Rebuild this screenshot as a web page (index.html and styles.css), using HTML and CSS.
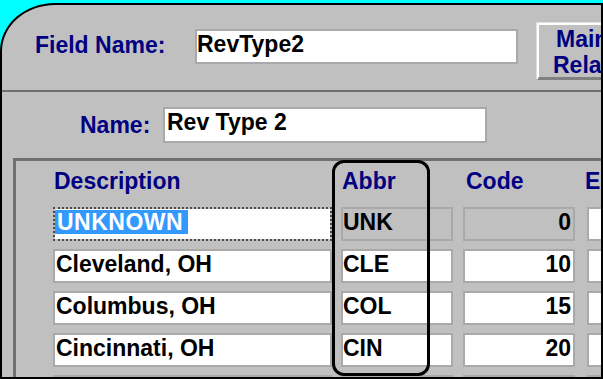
FILE: index.html
```html
<!DOCTYPE html>
<html>
<head>
<meta charset="utf-8">
<title>Field Name</title>
<link rel="stylesheet" href="styles.css">
</head>
<body>
<div class="screen">
  <div class="window">
    <div class="top-row">
      <div class="label lbl-field">Field Name:</div>
      <div class="field fld-fieldname">RevType2</div>
      <div class="btn">
        <span class="btn-l1">Maintain</span>
        <span class="btn-l2">Relationships</span>
      </div>
    </div>
    <div class="sep"></div>
    <div class="name-row">
      <div class="label lbl-name">Name:</div>
      <div class="field fld-name">Rev Type 2</div>
    </div>
    <div class="panel">
      <div class="grid">
        <div class="hdr hdr-desc">Description</div>
        <div class="hdr hdr-abbr">Abbr</div>
        <div class="hdr hdr-code">Code</div>
        <div class="hdr hdr-e">E</div>

        <div class="field desc focus"><span class="sel">UNKNOWN</span></div>
        <div class="field abbr disabled">UNK</div>
        <div class="field code disabled">0</div>
        <div class="field ext"></div>

        <div class="field desc">Cleveland, OH</div>
        <div class="field abbr">CLE</div>
        <div class="field code">10</div>
        <div class="field ext"></div>

        <div class="field desc">Columbus, OH</div>
        <div class="field abbr">COL</div>
        <div class="field code">15</div>
        <div class="field ext"></div>

        <div class="field desc">Cincinnati, OH</div>
        <div class="field abbr">CIN</div>
        <div class="field code">20</div>
        <div class="field ext"></div>

        <div class="field desc"></div>
        <div class="field abbr"></div>
        <div class="field code"></div>
        <div class="field ext"></div>
      </div>
      <div class="abbr-ring"></div>
    </div>
  </div>
</div>
</body>
</html>
```
FILE: styles.css
```css
html, body {
  margin: 0;
  padding: 0;
}
body {
  font-family: "Liberation Sans", Arial, sans-serif;
  font-weight: bold;
  font-size: 23px;
}
.screen {
  width: 603px;
  height: 379px;
  background: #00ffff;
  overflow: hidden;
  padding-top: 3px;
  box-sizing: border-box;
}
.window {
  height: 376px;
  box-sizing: border-box;
  border: 2px solid #000;
  border-top-left-radius: 55px 48px;
  background: #c0c0c0;
  overflow: hidden;
}
.label {
  color: #000080;
  line-height: 26px;
  flex-shrink: 0;
  white-space: nowrap;
}
.field {
  box-sizing: border-box;
  border: 2px solid #a9a9a9;
  background: #fff;
  color: #000;
  line-height: 26px;
  white-space: nowrap;
  overflow: hidden;
  flex-shrink: 0;
}
.top-row {
  display: flex;
  align-items: flex-start;
  height: 85px;
  padding-left: 33px;
  box-sizing: border-box;
}
.lbl-field {
  margin-top: 27px;
  width: 160px;
}
.fld-fieldname {
  margin-top: 24px;
  width: 323px;
  height: 35px;
  padding-left: 0;
}
.btn {
  flex-shrink: 0;
  margin-left: 19px;
  margin-top: 18px;
  width: 130px;
  height: 57px;
  box-sizing: border-box;
  border-top: 2px solid #fff;
  border-left: 2px solid #fff;
  border-bottom: 3px solid #808080;
  border-right: 3px solid #808080;
  box-shadow: -1px -1px 0 #dfdfdf;
  color: #000080;
  line-height: 26px;
  padding-top: 1px;
  white-space: nowrap;
}
.btn-l1 {
  display: block;
  padding-left: 17px;
}
.btn-l2 {
  display: block;
  padding-left: 14px;
}
.sep {
  height: 2px;
  background: #6f6f6f;
}
.name-row {
  display: flex;
  align-items: flex-start;
  height: 66px;
  padding-left: 78px;
  box-sizing: border-box;
}
.lbl-name {
  margin-top: 20px;
  width: 83px;
}
.fld-name {
  margin-top: 15px;
  width: 324px;
  height: 36px;
  padding-left: 2px;
}
.panel {
  position: relative;
  margin-left: 11px;
  border-top: 3px solid #707070;
  border-left: 3px solid #707070;
  padding: 7px 0 0 37px;
  height: 300px;
}
.grid {
  display: grid;
  grid-template-columns: 288px 122px 124px 112px;
  row-gap: 8px;
}
.hdr {
  color: #000080;
  line-height: 26px;
  height: 26px;
  margin-bottom: 5px;
  padding-left: 1px;
  white-space: nowrap;
}
.hdr-code {
  padding-left: 3px;
}
.hdr-e {
  padding-left: 0;
  margin-left: -2px;
}
.grid .field {
  height: 34px;
}
.desc {
  width: 279px;
  padding-left: 1px;
}
.abbr {
  width: 112px;
  padding-left: 0;
}
.code {
  width: 112px;
  text-align: right;
  padding-right: 2px;
}
.ext {
  width: 112px;
}
.disabled {
  background: #c0c0c0;
}
.focus {
  border: 2px dotted #4a4a4a;
  background-clip: padding-box;
  padding-left: 0;
}
.sel {
  display: inline-block;
  vertical-align: top;
  margin-top: 1px;
  line-height: 24px;
  padding: 0 5px 0 2px;
  background: #3399ff;
  color: #fff;
  letter-spacing: 0.5px;
}
.abbr-ring {
  position: absolute;
  left: 316px;
  top: -1px;
  width: 98px;
  height: 216px;
  box-sizing: border-box;
  border: 3px solid #000;
  border-radius: 12px;
}
```
